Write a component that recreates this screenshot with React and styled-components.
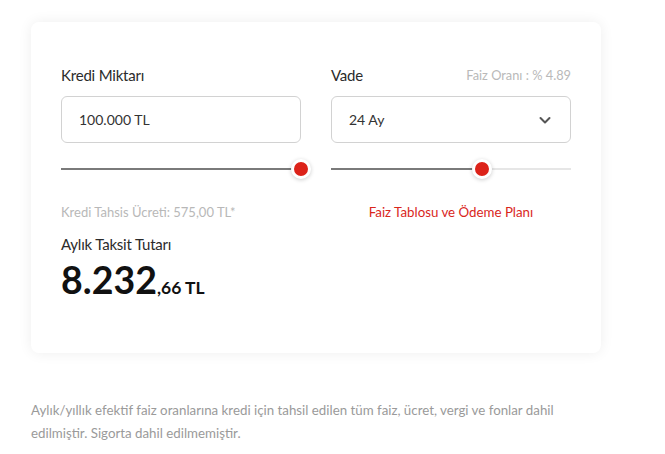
import React from 'react'
import styled, { createGlobalStyle } from 'styled-components'

const GlobalStyle = createGlobalStyle`
   body{
      margin:0;
      background:#fff;
      font-family:'Lato','Noto Sans',sans-serif;
   }
`

function Slider({ value }) {
   return (
      <Track>
         <Fill style={{ width: `${value}%` }} />
         <Thumb style={{ left: `${value}%` }} />
      </Track>
   )
}

export default function App() {
   return (
      <Page>
         <GlobalStyle />
         <Card>
            <Grid>
               <Field>
                  <LabelRow>
                     <Label>Kredi Miktarı</Label>
                  </LabelRow>
                  <Box>100.000 TL</Box>
                  <Slider value={100} />
               </Field>
               <Field>
                  <LabelRow>
                     <Label>Vade</Label>
                     <Rate>Faiz Oranı : % 4.89</Rate>
                  </LabelRow>
                  <Box>
                     24 Ay
                     <svg width="14" height="14" viewBox="0 0 14 14">
                        <path d="M2.5 5 L7 9.5 L11.5 5" fill="none" stroke="#555" strokeWidth="2" strokeLinecap="round" strokeLinejoin="round" />
                     </svg>
                  </Box>
                  <Slider value={63} />
               </Field>
               <Note>Kredi Tahsis Ücreti: 575,00 TL*</Note>
               <PlanLink>Faiz Tablosu ve Ödeme Planı</PlanLink>
            </Grid>
            <Result>
               <Label>Aylık Taksit Tutarı</Label>
               <Amount>8.232<small>,66 TL</small></Amount>
            </Result>
         </Card>
         <Disclaimer>
            Aylık/yıllık efektif faiz oranlarına kredi için tahsil edilen tüm faiz, ücret, vergi ve fonlar dahil edilmiştir. Sigorta dahil edilmemiştir.
         </Disclaimer>
      </Page>
   )
}

const Page = styled.div`
   padding:22px 0 0 31px;
   width:570px;
`

const Card = styled.div`
   background:#fff;
   border-radius:8px;
   box-shadow:0 0 14px rgba(0,0,0,0.07);
   padding:43px 30px 40px;
   height:331px;
   box-sizing:border-box;
`

const Grid = styled.div`
   display:grid;
   grid-template-columns:240px 240px;
   column-gap:30px;
`

const Field = styled.div`
   display:flex;
   flex-direction:column;
`

const LabelRow = styled.div`
   display:flex;
   justify-content:space-between;
   align-items:center;
   height:20px;
   margin-bottom:11px;
`

const Label = styled.div`
   font-size:15px;
   color:#2b2b2b;
   letter-spacing:-0.2px;
`

const Rate = styled.div`
   font-size:12.8px;
   color:#b9b9b9;
`

const Box = styled.div`
   height:47px;
   box-sizing:border-box;
   border:1px solid #d2d2d2;
   border-radius:6px;
   padding:0 18px 0 17px;
   display:flex;
   align-items:center;
   justify-content:space-between;
   font-size:14px;
   color:#333;
`

const Track = styled.div`
   position:relative;
   height:2px;
   margin-top:25px;
   background:#e6e6e6;
`

const Fill = styled.div`
   height:100%;
   background:#7a7a7a;
`

const Thumb = styled.div`
   position:absolute;
   top:50%;
   width:14px;
   height:14px;
   border-radius:50%;
   background:#dc2219;
   border:3px solid #fff;
   box-shadow:0 1px 4px rgba(0,0,0,0.2);
   transform:translate(-50%,-50%);
`

const Note = styled.div`
   margin-top:34px;
   font-size:13px;
   color:#b8b8b8;
`

const PlanLink = styled.a`
   margin-top:34px;
   text-align:center;
   font-size:13.3px;
   color:#d9261c;
   cursor:pointer;
`

const Result = styled.div`
   margin-top:15px;
`

const Amount = styled.div`
   margin-top:4px;
   font-size:37.5px;
   font-weight:700;
   color:#111;
   small{
      font-size:17.5px;
      font-weight:700;
   }
`

const Disclaimer = styled.p`
   margin:46px 0 0;
   font-size:13.3px;
   line-height:23px;
   color:#9a9a9a;
   width:560px;
`
